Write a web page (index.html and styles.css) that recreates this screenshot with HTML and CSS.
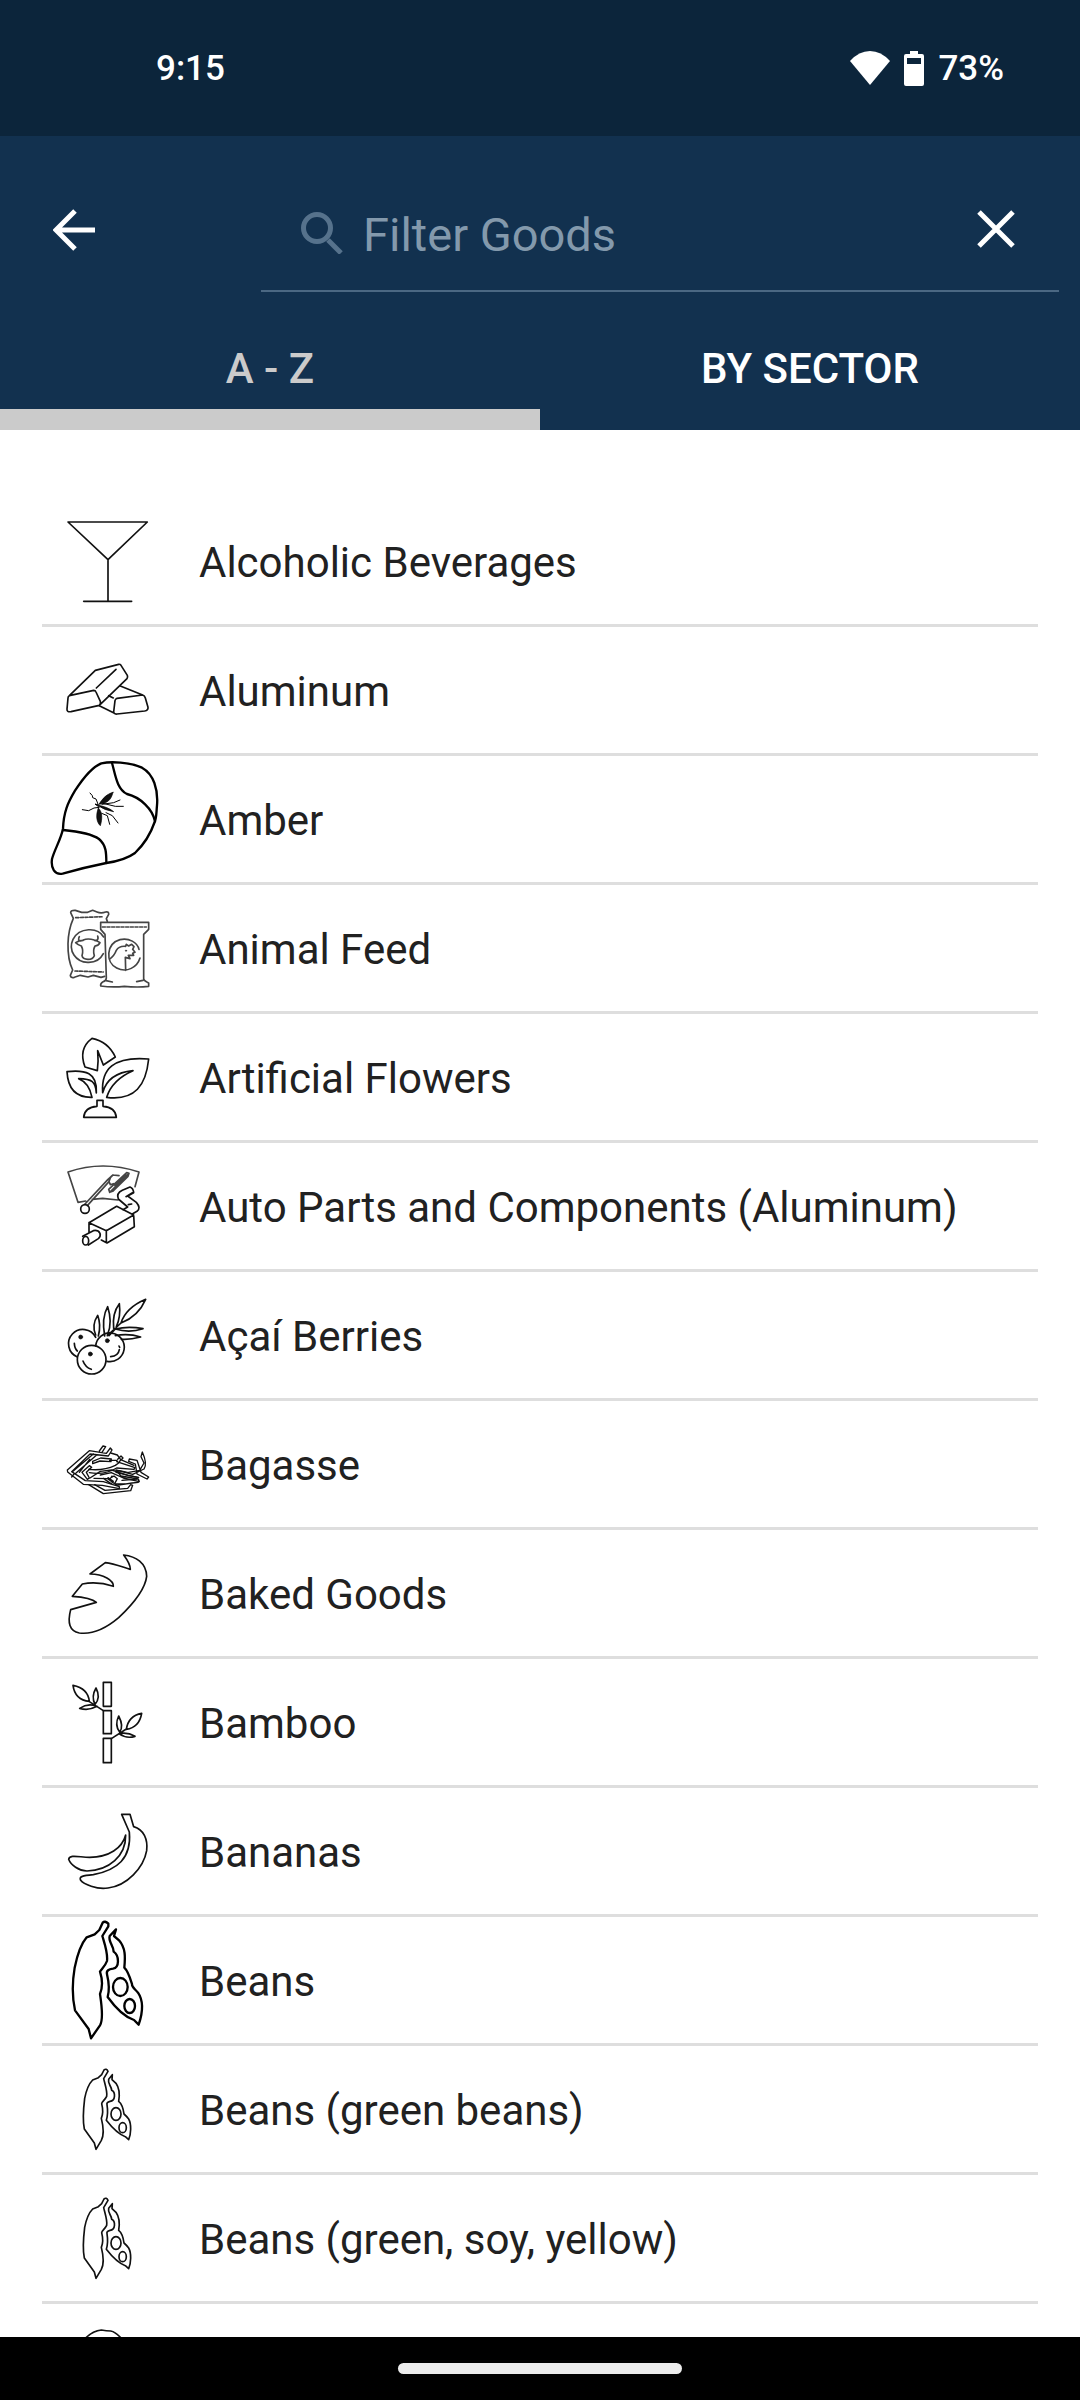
FILE: index.html
```html
<!DOCTYPE html>
<html lang="en">
<head>
  <meta charset="UTF-8">
  <meta name="viewport" content="width=device-width, initial-scale=1.0">
  <title>Goods</title>
  <link rel="stylesheet" href="styles.css">
</head>
<body>
  <!--STATUS BAR-->
  <div class="status-bar">
    <span>9:15</span>
    <div class="status-icons">
      <svg class="wifi" viewBox="0 0 40 34"><path d="M20 34 L0 10 Q9 0 20 0 Q31 0 40 10 Z"/></svg>
      <svg class="battery" viewBox="0 0 20 35"><path fill-rule="evenodd" d="M6 0H14V3H18Q20 3 20 5V33Q20 35 18 35H2Q0 35 0 33V5Q0 3 2 3H6ZM3 7V13H17V7Z"/></svg>
      <span>73%</span>
    </div>
  </div>

  <!--HEADER-->
  <header class="header">
    <div class="toolbar">
      <button class="icon-button" aria-label="Back">
        <svg class="back" viewBox="0 0 42 42"><path d="M42 21H4M22 2L3 21L22 40"/></svg>
      </button>
      <div class="filter">
        <label for="filterInput" aria-label="Filter Goods">
          <svg class="search" viewBox="0 0 42 42"><circle cx="16" cy="16" r="13.5"/><path d="M27 28L40 41"/></svg>
        </label>
        <input type="text" id="filterInput" placeholder="Filter Goods">
        <button class="icon-button clear-button" aria-label="Clear">
          <svg class="clear" viewBox="0 0 38 38"><path d="M2 2L36 36M36 2L2 36"/></svg>
        </button>
      </div>
    </div>
    <div class="tabs">
      <button class="tab active">A - Z</button>
      <button class="tab">BY SECTOR</button>
    </div>
  </header>

  <!--GOODS-->
  <main class="content">
    <ul class="goods">
      <li><a href="#">
        <svg class="icon" viewBox="6 -6 396 378"><path d="M84 66H322L204 179ZM204 179V304M131 304H275"/></svg>
        <span>Alcoholic Beverages</span>
      </a></li>
      <li><a href="#">
        <svg class="icon" viewBox="6 381 396 378">
          <path d="M88 587L161 571Q166 571 168 576L181 604Q183 611 178 616L93 635Q80 637 81 627L84 594Q84 589 88 587L166 511L236 493Q240 492 243 496L262 526Q264 531 261 536L181 613M169 564L228 508"/>
          <path d="M241 558L308 585L231 595Q226 597 225 602L221 636Q222 643 231 642L314 633Q325 631 324 622L316 594Q314 587 308 585M178 617L222 639M206 587L220 594"/>
        </svg>
        <span>Aluminum</span>
      </a></li>
      <li><a href="#">
        <svg class="icon bold" viewBox="6 18 396 378">
          <path d="M184 40C212 34 269 36 306 53C341 72 355 119 351 166C349 187 350 202 344 216C331 254 306 289 285 309C262 326 226 335 199 339C159 347 113 358 68 371C44 376 32 355 36 327C43 300 63 267 69 236C71 186 83 159 105 122C127 88 156 51 184 40Z"/>
          <path d="M216 39C226 73 230 117 261 132C301 142 338 177 345 214M69 240C111 244 156 252 177 267C199 286 199 309 199 339"/>
          <path class="solid" d="M219 127C213 151 203 159 177 163C188 145 199 133 219 127ZM175 174C188 186 187 207 181 227C169 216 167 195 175 174ZM171 165Q203 170 221 185Q195 182 171 165Z"/>
          <path class="thin" d="M150 129L157 137L158 143L168 147L175 165L165 162L178 172L162 174L146 182L127 179M186 163L221 158L240 150M189 160L226 169H250M185 190L202 197L209 223M198 188L217 197L234 219"/>
        </svg>
        <span>Amber</span>
      </a></li>
      <li><a href="#">
        <svg class="icon grey" viewBox="6 405 396 378">
          <path d="M202 514L199 506L206 493Q207 484 197 486Q183 491 171 486L158 481L143 487L125 487L106 481Q92 480 92 488L100 505Q85 539 84 581Q83 629 98 660L91 676Q92 685 103 682L121 676L144 681L160 676L183 682L194 679"/>
          <path d="M182 517H326V538L311 553V686Q312 693 326 699V709Q293 713 253 709Q218 713 182 708Q181 700 188 696Q199 692 199 684L195 553L182 538ZM198 692L217 696M290 695L309 691"/>
          <path d="M191 561C173 530 118 532 99 568C83 602 108 636 143 637C165 638 182 627 190 611"/>
          <path d="M118 560Q112 572 122 573L130 570Q143 564 163 570L171 571Q176 566 173 558M130 571Q117 571 107 578Q114 585 124 588Q131 601 126 617Q128 628 144 628Q159 628 163 617Q158 601 165 588Q176 587 180 578Q171 571 163 571"/>
          <path d="M300 624C292 651 261 670 230 654C195 636 199 581 240 569C267 563 292 577 297 598M208 628Q223 618 229 601Q237 587 257 589L259 583L266 588L275 583L282 590L278 598L285 607L278 610L281 616L265 616L270 626L256 622L257 661"/>
          <path d="M107 503L190 500M105 663L190 666M187 531H319" stroke-dasharray="9 5"/>
          <circle class="solid" cx="258" cy="602" r="2"/>
        </svg>
        <span>Animal Feed</span>
      </a></li>
      <li><a href="#">
        <svg class="icon" viewBox="6 12 396 378">
          <path d="M172 182L135 171C122 137 128 106 156 85C187 91 212 111 226 141L190 165L173 122Q176 154 172 182Z"/>
          <path d="M169 249C167 214 156 207 116 206C139 215 151 235 156 262C114 263 84 243 81 185C135 179 173 187 169 249Z"/>
          <path d="M188 248C183 178 220 138 326 147C318 225 286 273 200 262C211 226 242 198 279 182C228 187 198 211 188 248Z"/>
          <path d="M131 322Q134 291 171 289V271H189V289Q226 291 229 322Z"/>
        </svg>
        <span>Artificial Flowers</span>
      </a></li>
      <li><a href="#">
        <svg class="icon" viewBox="6 399 396 378">
          <path class="grey" d="M137 573L114 577L84 486Q188 450 297 486L285 530M157 568L188 565L234 570M142 587L207 515M135 582L204 508L219 495L237 497M220 521L211 524L207 515Q209 501 219 495M209 547L267 490M206 538L260 488L267 490L264 499L218 544L209 547L206 538M225 527L259 495"/>
          <circle cx="135" cy="597" r="13"/>
          <path d="M147 638L230 589L281 615L283 650L201 699L184 690M147 638V667M147 638L199 662L281 615M199 662V698M128 679L160 662Q174 659 180 670Q183 680 175 686L145 705"/>
          <ellipse cx="137" cy="692" rx="9" ry="13"/>
          <path d="M249 599L263 591L235 567Q228 550 247 541L270 531Q280 535 281 548L263 558L289 577Q304 594 291 604L278 611M281 546L258 560M265 584L275 582"/>
        </svg>
        <span>Auto Parts and Components (Aluminum)</span>
      </a></li>
      <li><a href="#">
        <svg class="icon" viewBox="6 6 396 378">
          <circle cx="155" cy="269" r="43"/>
          <path d="M112 261A43 43 0 1 1 167 202M167 228A43 43 0 1 1 201 274M103 220Q104 236 112 243M129 273Q136 292 154 298M212 260Q235 258 238 239"/>
          <path d="M237 228L239 232M167 195Q154 166 173 136Q184 166 175 198M194 198Q184 144 203 110Q218 156 203 193M221 175Q216 130 238 101Q243 140 229 170M243 159Q258 113 317 88Q295 139 243 159ZM202 197L243 159M226 177Q264 168 309 176Q268 190 226 177ZM226 197Q264 189 302 201Q269 210 244 208M207 197L226 177"/>
          <circle class="solid" cx="122" cy="201" r="6"/><circle class="solid" cx="151" cy="252" r="6"/><circle class="solid" cx="202" cy="212" r="6"/>
        </svg>
        <span>Açaí Berries</span>
      </a></li>
      <li><a href="#">
        <svg class="icon straw" viewBox="6 393 396 378">
          <path d="M82 600L148 542L199 550L211 534L216 540L205 558L150 552L95 605L136 632L190 635L238 650V656L187 646L130 643L83 606ZM95 621L103 611M99 604L160 552M108 609L170 555M178 543L189 528L197 530L186 547M118 607L149 568"/>
          <path d="M126 607L148 587L155 592L139 607L148 624L142 628ZM158 574L182 564L214 567L213 575L180 573L158 581ZM146 598Q190 603 226 586L236 579L230 571L209 571M148 608Q194 616 230 594L282 598L285 593L230 575M212 549L232 555L242 569L282 586M233 568L243 558L249 564L239 574"/>
          <path d="M150 624L181 604L215 600L263 616L296 622M181 615L214 608L250 624L298 635L295 627L243 618L228 600L278 613L312 597Q323 582 307 546L303 560L312 579L299 601L262 608M268 567L291 571L303 607L326 621L321 627L291 612L286 582L266 574Z"/>
          <path d="M146 644L190 671L272 662L278 646L272 644L263 655L195 661L164 644M162 625L203 626L230 646L276 639L295 637M190 625L213 641L220 634L204 623M213 623L222 618L232 626L224 641L255 642M208 630L216 618M238 602L262 607M228 607L292 622M246 631L291 627"/>
        </svg>
        <span>Bagasse</span>
      </a></li>
      <li><a href="#">
        <svg class="icon" viewBox="6 0 396 378"><path d="M251 75C288 79 319 99 320 139C315 183 273 228 236 263C197 296 156 314 118 309C88 303 82 278 92 239L169 217C156 205 130 201 97 199L127 162C158 156 190 159 220 169C221 151 191 132 150 132L196 98C222 101 247 111 271 118C271 103 260 87 251 75Z"/></svg>
        <span>Baked Goods</span>
      </a></li>
      <li><a href="#">
        <svg class="icon" viewBox="6 387 396 378">
          <path d="M190 457H214V529H190ZM190 542H214V611H190ZM190 625H214V698H190Z"/>
          <path d="M190 542L148 515M99 466Q144 475 148 514Q105 510 99 466ZM168 474Q183 503 165 523Q153 500 168 474ZM119 535Q144 518 171 529Q146 543 119 535ZM214 626L259 597M305 550Q298 592 259 598Q265 557 305 550ZM236 558Q252 589 239 606Q223 586 236 558ZM237 611Q263 606 285 619Q259 627 237 611Z"/>
        </svg>
        <span>Bamboo</span>
      </a></li>
      <li><a href="#">
        <svg class="icon" viewBox="6 -6 396 378">
          <path d="M245 73H270L281 110C312 119 324 149 320 182C311 233 261 287 204 294C171 300 130 282 122 271C116 259 129 257 160 254C232 240 275 205 268 126Z"/>
          <path d="M257 135C247 174 207 202 149 202C119 202 88 192 86 208C92 225 117 243 141 243C207 241 258 198 257 135Z"/>
        </svg>
        <span>Bananas</span>
      </a></li>
      <li><a href="#">
        <svg class="icon bold" viewBox="6 381 396 378">
          <path d="M188 398Q195 391 205 401L205 409L187 438C194 462 204 488 201 513C196 528 184 538 180 545C188 570 189 590 180 612C184 640 192 687 180 706L153 745L146 717L105 661C98 629 96 580 104 533C111 499 122 463 140 442L164 433L178 420Z"/>
          <path d="M228 418L209 438C204 454 221 468 221 485C238 497 239 532 219 536C207 538 198 541 201 553C206 574 209 600 203 621C226 653 255 681 282 690L296 704C307 672 312 634 294 608C285 597 275 592 276 582C270 563 264 543 253 533C256 500 257 474 237 451L222 438Z"/>
          <ellipse cx="241" cy="591" rx="22" ry="27"/><ellipse cx="269" cy="648" rx="16" ry="21"/>
        </svg>
        <span>Beans</span>
      </a></li>
      <li><a href="#">
        <svg class="icon" viewBox="6 18 396 378">
          <g id="pods">
            <path d="M192 90Q199 84 204 94L191 116C195 133 203 156 200 169C195 180 185 185 185 191C190 211 190 221 184 235C191 263 192 286 184 301L168 328L163 309L133 267C127 239 130 208 134 175C139 150 146 132 158 120L175 113L185 104Z"/>
            <path d="M217 104L206 118C202 132 215 138 215 151C227 157 227 182 210 184Q199 187 201 194C204 213 204 225 199 241C213 259 238 284 256 290L266 299C273 283 275 253 266 237Q259 228 252 222C250 207 245 191 236 184C240 161 238 144 228 130L216 119Z"/>
            <ellipse cx="228" cy="222" rx="15" ry="19"/><ellipse cx="248" cy="263" rx="11" ry="15"/>
          </g>
        </svg>
        <span>Beans (green beans)</span>
      </a></li>
      <li><a href="#">
        <svg class="icon" viewBox="6 18 396 378"><use href="#pods"/></svg>
        <span>Beans (green, soy, yellow)</span>
      </a></li>
      <li><a href="#" aria-label="Next good">
        <svg class="icon" viewBox="6 792 396 378"><path d="M127 905Q153 873 184 870Q200 873 212 873Q229 876 249 901Q269 950 205 980Q130 980 127 905Z"/></svg>
      </a></li>
    </ul>
  </main>

  <!--NAVIGATION BAR-->
  <div class="nav-bar"><div class="home-pill"></div></div>
</body>
</html>
```
FILE: styles.css
```css
* {
  box-sizing: border-box;
}
body {
  font-family: Roboto, "Noto Sans", sans-serif;
  font-size: 42px;
  display: flex;
  flex-direction: column;
  height: 100vh;
  margin: 0;
  background-color: #ffffff;
  color: #212121;
}
button {
  font-family: inherit;
  padding: 0;
  border: none;
  background: none;
  color: #ffffff;
  cursor: pointer;
}
.status-bar {
  display: flex;
  justify-content: space-between;
  align-items: center;
  flex-shrink: 0;
  height: 136px;
  padding: 0 76px 0 156px;
  background-color: #0c253b;
  color: #ffffff;
  font-size: 35px;
  font-weight: 500;
}
.status-icons {
  display: flex;
  align-items: center;
  gap: 14px;
}
.status-icons svg {
  fill: #ffffff;
}
.wifi {
  width: 40px;
  height: 34px;
}
.battery {
  width: 20px;
  height: 35px;
}
.header {
  flex-shrink: 0;
  background-color: #12314f;
}
.toolbar {
  display: flex;
  justify-content: space-between;
  align-items: flex-end;
  height: 168px;
  padding: 0 21px 12px 37px;
}
.toolbar svg {
  display: block;
  margin: 0 auto;
  fill: none;
  stroke: #ffffff;
  stroke-width: 5;
}
.icon-button {
  flex-shrink: 0;
  width: 74px;
  height: 124px;
}
.back {
  width: 42px;
}
.clear {
  width: 38px;
}
.clear-button {
  padding-bottom: 8px;
}
.filter {
  display: flex;
  align-items: center;
  flex: 1;
  min-width: 0;
  height: 116px;
  margin-left: 150px;
  padding: 0 26px 0 40px;
  border-bottom: 2px solid #4b6883;
}
.filter .search {
  width: 42px;
  stroke: #56728c;
}
.filter input {
  flex: 1;
  min-width: 0;
  padding: 2px 0 0 20px;
  border: none;
  outline: none;
  background: none;
  color: #ffffff;
  font-family: inherit;
  font-size: 47px;
}
.filter input::placeholder {
  color: #8399ac;
  opacity: 1;
}
.tabs {
  display: flex;
}
.tab {
  flex: 1;
  height: 126px;
  padding-top: 2px;
  border-top: 21px solid transparent;
  border-bottom: 21px solid transparent;
  font-size: 42px;
  font-weight: 500;
}
.tab.active {
  color: #cbcbcb;
  border-bottom-color: #cbcbcb;
}
.content {
  flex: 1;
  min-height: 0;
  overflow: hidden;
  padding: 68px 42px 0;
}
.goods {
  list-style: none;
  margin: 0;
  padding: 0;
}
.goods a {
  display: flex;
  align-items: center;
  gap: 25px;
  height: 129px;
  border-bottom: 3px solid #dedede;
  color: inherit;
  text-decoration: none;
}
.goods span {
  padding-top: 2px;
}
.icon {
  flex-shrink: 0;
  width: 132px;
  height: 126px;
  fill: none;
  stroke: #111111;
  stroke-width: 5;
  stroke-linejoin: round;
  stroke-linecap: round;
}
.icon.bold {
  stroke: #000000;
  stroke-width: 7;
}
.icon.straw {
  stroke-width: 4;
}
.icon.grey,
.icon .grey {
  stroke: #444444;
}
.icon .solid {
  fill: #111111;
  stroke-width: 2;
}
.icon .thin {
  stroke-width: 3;
}
.nav-bar {
  display: flex;
  justify-content: center;
  align-items: center;
  flex-shrink: 0;
  height: 63px;
  background-color: #000000;
}
.home-pill {
  width: 284px;
  height: 11px;
  border-radius: 6px;
  background-color: #ececec;
}
```
